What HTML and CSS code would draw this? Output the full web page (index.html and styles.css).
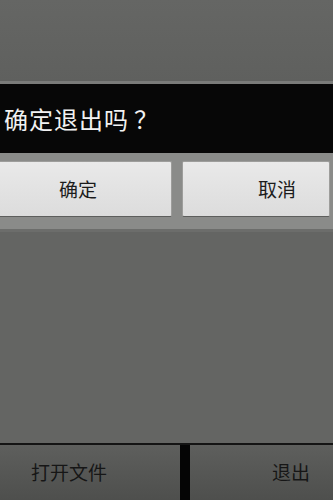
FILE: index.html
```html
<!DOCTYPE html>
<html lang="zh">

<head>
  <meta charset="UTF-8">
  <meta name="viewport" content="width=device-width, initial-scale=1.0">
  <title>退出</title>
  <link rel="stylesheet" href="styles.css">
</head>

<body>
  <div class="screen">
    <div class="top-space"></div>
    <div class="dialog">
      <div class="title">确定退出吗<span class="mark">？</span></div>
      <div class="btns">
        <div class="btn ok">确定</div>
        <div class="btn cancel">取消</div>
      </div>
    </div>
    <div class="middle"></div>
    <div class="menu">
      <div class="menu-item open">打开文件</div>
      <div class="divider"></div>
      <div class="menu-item quit">退出</div>
    </div>
  </div>
</body>

</html>
```

FILE: styles.css
```css
* {
  margin: 0;
  padding: 0;
  box-sizing: border-box;
}

body {
  width: 333px;
  height: 500px;
  overflow: hidden;
  background: #636462;
  font-family: "Noto Sans CJK SC", "DejaVu Sans", sans-serif;
}

.screen {
  height: 500px;
  display: flex;
  flex-direction: column;
}

.top-space {
  height: 81px;
  background: linear-gradient(#656664, #5f605e);
}

.dialog {
  border-top: 3px solid #7a7b79;
}

.title {
  height: 69px;
  background: #070707;
  color: #f2f2f2;
  font-size: 24px;
  line-height: 69px;
  padding-left: 4px;
  letter-spacing: 1px;
}

.title .mark {
  margin-left: 5px;
}

.btns {
  height: 79px;
  background: #8a8b89;
  border-bottom: 3px solid #6c6d6b;
  display: flex;
  gap: 10px;
  padding: 8px 3px 0 0;
  margin-left: -12px;
}

.btn {
  height: 56px;
  background: linear-gradient(#e9e9e9, #dcdcdc);
  border: 1px solid #9d9d9b;
  border-bottom-color: #5d5e5c;
  border-radius: 2px;
  color: #1c1c1c;
  font-size: 19px;
  line-height: 54px;
}

.ok {
  width: 184px;
  padding-left: 70px;
}

.cancel {
  flex: 1;
  padding-left: 75px;
}

.middle {
  flex: 1;
  background: #646563;
}

.menu {
  height: 57px;
  border-top: 2px solid #141414;
  display: flex;
}

.menu-item {
  background: linear-gradient(#5e5f5d, #4e4f4d);
  color: #161616;
  font-size: 19px;
  line-height: 54px;
}

.open {
  width: 180px;
  padding-left: 31px;
}

.divider {
  width: 10px;
  background: #050505;
}

.quit {
  flex: 1;
  padding-left: 82px;
}
```
